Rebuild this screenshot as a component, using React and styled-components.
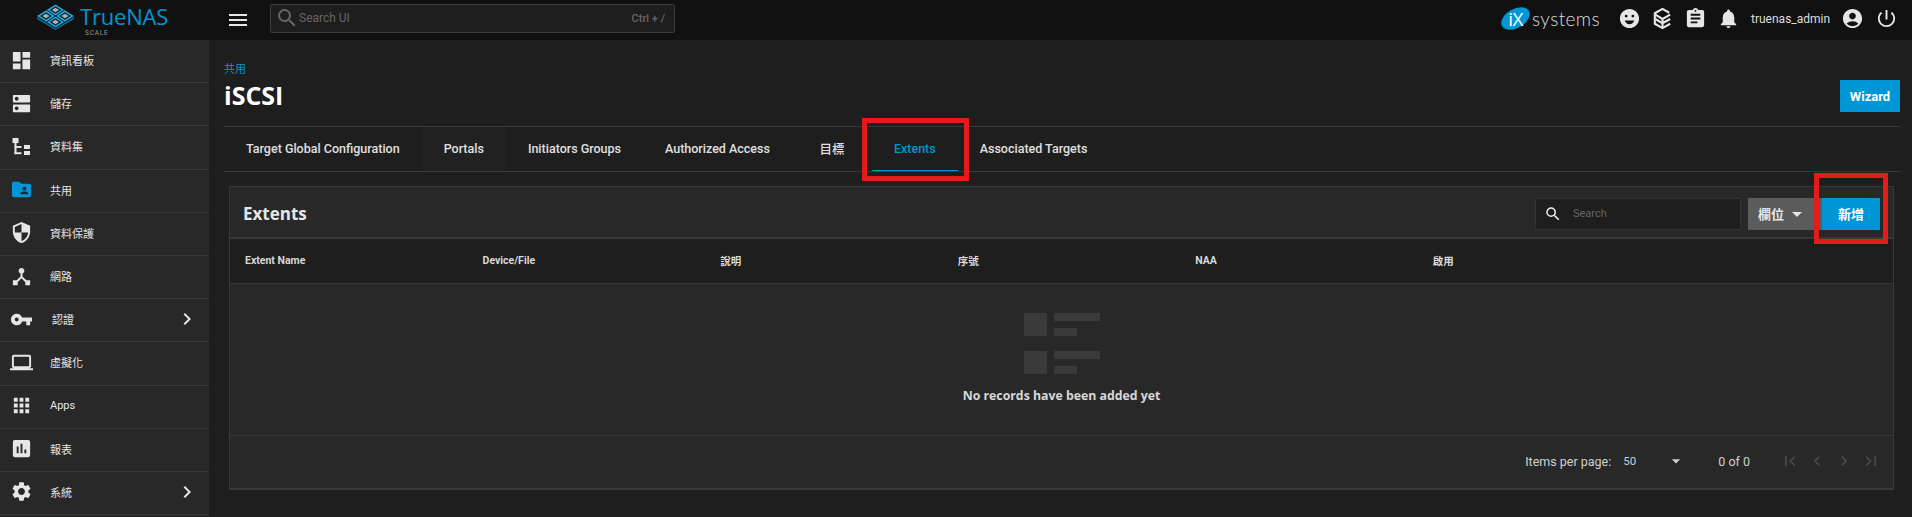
import React from "react"
import styled, { createGlobalStyle } from "styled-components"
import {
  MdDashboard,
  MdDns,
  MdFolderShared,
  MdSecurity,
  MdDeviceHub,
  MdVpnKey,
  MdLaptop,
  MdApps,
  MdAssessment,
  MdSettings,
  MdChevronRight,
  MdChevronLeft,
  MdFirstPage,
  MdLastPage,
  MdMenu,
  MdSearch,
  MdEmojiEmotions,
  MdAssignment,
  MdNotifications,
  MdAccountCircle,
  MdPowerSettingsNew,
  MdArrowDropDown,
} from "react-icons/md"

const cjk = `"Noto Sans CJK TC"`
const bodyFont = `Roboto, ${cjk}, sans-serif`
const blue = "#0095d5"
const line = "#383838"

const GlobalStyles = createGlobalStyle`
  html, body {
    margin: 0;
    height: 100%;
    overflow: hidden;
    background: #1e1e1e;
    font-family: ${bodyFont};
  }
  * {
    box-sizing: border-box;
  }
`

const Shell = styled.div`
  height: 517px;
  display: flex;
  flex-direction: column;
`

// TOP BAR
const Topbar = styled.header`
  height: 40px;
  flex: none;
  background: #111;
  display: flex;
  align-items: center;
  color: #e6e6e6;
`

const LogoBox = styled.div`
  width: 209px;
  flex: none;
  padding-left: 37px;
  display: flex;
  align-items: flex-start;
  gap: 6px;
  height: 40px;
  padding-top: 4px;
`

const LogoText = styled.div`
  position: relative;
  color: ${blue};
  font-family: "Open Sans", sans-serif;
  font-size: 22px;
  line-height: 25px;
  letter-spacing: -0.2px;
  width: 90px;

  span {
    position: absolute;
    left: 5px;
    top: 25px;
    font-family: Roboto, sans-serif;
    font-size: 6.5px;
    line-height: 8px;
    letter-spacing: 0.8px;
    color: #999;
  }
`

const MenuButton = styled.div`
  width: 61px;
  flex: none;
  padding-left: 17px;
  display: flex;
  font-size: 24px;
  color: #e6e6e6;
`

const TopSearch = styled.div`
  width: 405px;
  height: 29px;
  margin-top: -4px;
  border: 1px solid #3c3c3c;
  border-radius: 2px;
  background: #1e1e1e;
  display: flex;
  align-items: center;
  padding: 0 9px 0 4px;
  color: #666;
  font-size: 12px;

  svg {
    font-size: 24px;
    margin-right: 0;
  }

  em {
    font-style: normal;
    margin-left: auto;
    font-size: 11px;
    font-weight: 500;
  }
`

const TopRight = styled.div`
  margin-left: auto;
  display: flex;
  align-items: center;
  height: 40px;
  padding-right: 4px;
  margin-top: -3px;
`

const IxLogo = styled.div`
  display: flex;
  align-items: center;
  margin-right: 13px;
`

const IxBadge = styled.div`
  width: 31px;
  height: 19px;
  background: ${blue};
  border-radius: 50%;
  transform: rotate(-30deg);
  display: flex;
  align-items: center;
  justify-content: center;

  span {
    transform: rotate(30deg);
    color: #fff;
    font-family: "Open Sans", sans-serif;
    font-size: 19px;
    line-height: 20px;
    letter-spacing: -0.5px;
  }
`

const IxName = styled.span`
  font-family: Lato, sans-serif;
  font-weight: 300;
  font-size: 19px;
  line-height: 24px;
  margin-left: 1px;
  color: #ddd;
  letter-spacing: 0.4px;
`

const TopIcon = styled.div`
  width: ${(p) => p.$w || 33}px;
  display: flex;
  justify-content: center;
  font-size: 23px;
  color: #e6e6e6;
`

const UserName = styled.span`
  width: 89px;
  margin-left: 6px;
  font-size: 12px;
  color: #ddd;
  white-space: nowrap;
`

// SIDEBAR
const Layout = styled.div`
  flex: 1;
  display: flex;
  min-height: 0;
`

const Sidebar = styled.nav`
  width: 209px;
  flex: none;
  background: #282828;
  overflow: hidden;
`

const NavRow = styled.div`
  height: 43.2px;
  padding-left: ${(p) => p.$pad || 50}px;
  padding-bottom: 2px;
  border-bottom: 1px solid ${line};
  display: flex;
  align-items: center;
  position: relative;
  font-size: 11px;
  color: #e6e6e6;
`

const NavIcon = styled.div`
  width: 24px;
  position: absolute;
  left: 9px;
  display: flex;
  justify-content: center;
  font-size: 23px;
  color: ${(p) => (p.$active ? blue : "#e6e6e6")};
`

const NavArrow = styled.div`
  position: absolute;
  left: 175px;
  display: flex;
  font-size: 24px;
  color: #e6e6e6;
`

// PAGE
const Main = styled.main`
  flex: 1;
  min-width: 0;
  padding: 0 12px 0 15px;
  background: #1e1e1e;
`

const PageHead = styled.div`
  height: 87px;
  padding-bottom: 14px;
  border-bottom: 1px solid ${line};
  display: flex;
  justify-content: space-between;
  align-items: flex-end;
`

const Crumb = styled.div`
  font-size: 11px;
  line-height: 14px;
  color: ${blue};
  margin-bottom: 4px;
`

const Title = styled.h1`
  margin: 0 0 3px;
  font-family: "Open Sans", sans-serif;
  font-size: 25px;
  line-height: 28px;
  font-weight: 700;
  color: #fff;
`

const Wizard = styled.button`
  width: 60px;
  height: 32px;
  border: none;
  padding: 0;
  background: ${blue};
  color: #fff;
  font-family: ${bodyFont};
  font-size: 13px;
  font-weight: 700;
`

const TabBar = styled.div`
  height: 45px;
  border-bottom: 1px solid ${line};
  display: flex;
`

const Tab = styled.div`
  height: 44px;
  min-width: 80px;
  padding: 0 22px;
  position: relative;
  display: flex;
  align-items: center;
  justify-content: center;
  font-size: 12.5px;
  font-weight: 500;
  background: ${(p) => (p.$shaded ? "#212121" : "transparent")};
  color: ${(p) => (p.$active ? blue : "#e0e0e0")};
  border-bottom: 1px solid ${(p) => (p.$active ? blue : "transparent")};
`

const RedBox = styled.div`
  position: absolute;
  top: ${(p) => p.$t}px;
  right: ${(p) => p.$r}px;
  bottom: ${(p) => p.$b}px;
  left: ${(p) => p.$l}px;
  border: 5px solid #e21b1b;
`

const Card = styled.section`
  margin: 14px 6px 0 5px;
  background: #282828;
  border: 1px solid ${line};
  border-bottom-width: 2px;
`

const CardHead = styled.div`
  height: 52px;
  border-bottom: 2px solid ${line};
  padding: 4px 13px 1px 13px;
  display: flex;
  align-items: center;
`

const CardTitle = styled.h2`
  margin: 0;
  font-family: "Open Sans", sans-serif;
  font-size: 17px;
  font-weight: 700;
  color: #e6e6e6;
  margin-right: auto;
`

const TableSearch = styled.div`
  width: 206px;
  height: 32px;
  background: #1e1e1e;
  border: 1px solid #333;
  padding-left: 8px;
  display: flex;
  align-items: center;
  font-size: 11px;
  color: #666;

  svg {
    font-size: 18px;
    color: #eee;
    margin-right: 11px;
  }
`

const ColumnsButton = styled.div`
  width: 74px;
  height: 32px;
  margin-left: 7px;
  background: #5b5b5b;
  padding-left: 10px;
  display: flex;
  align-items: center;
  font-size: 13px;
  font-weight: 700;
  color: #e6e6e6;

  svg {
    font-size: 24px;
    margin-left: 1px;
  }
`

const AddButton = styled.div`
  width: 58px;
  height: 32px;
  position: relative;
  background: ${blue};
  display: flex;
  align-items: center;
  justify-content: center;
  font-size: 13px;
  font-weight: 700;
  color: #fff;
`

const HeadRow = styled.div`
  height: 45px;
  background: #1e1e1e;
  border-bottom: 1px solid ${line};
  display: grid;
  grid-template-columns: repeat(7, 1fr);
  align-items: center;
  padding-bottom: 1px;
`

const HeadCell = styled.div`
  padding-left: 15px;
  font-size: 10.5px;
  font-weight: 700;
  color: #d8d8d8;
`

const Empty = styled.div`
  height: 151px;
  padding-top: 29px;
  display: flex;
  flex-direction: column;
  align-items: center;
  gap: 13px;
  font-family: "Open Sans", sans-serif;
  font-size: 12.3px;
  font-weight: 700;
  color: #d8d8d8;
`

const EmptyRows = styled.div`
  display: grid;
  gap: 15px;
`

const EmptyRow = styled.div`
  display: grid;
  grid-template-columns: 23px 23px 23px;
  grid-template-rows: 8px 8px;
  column-gap: 7px;
  row-gap: 7px;
  width: 76px;
  height: 23px;
`

const EmptySquare = styled.div`
  grid-row: 1 / 3;
  background: #3a3a3a;
`

const EmptyLong = styled.div`
  grid-column: 2 / 4;
  width: 46px;
  background: #3a3a3a;
`

const EmptyShort = styled.div`
  background: #3a3a3a;
`

const Pager = styled.div`
  height: 53px;
  border-top: 1px solid ${line};
  display: flex;
  align-items: center;
  justify-content: flex-end;
  padding: 0 9px 2px 0;
  font-size: 12.5px;
  color: #d0d0d0;
`

const PageSize = styled.div`
  width: 65px;
  margin-left: 12px;
  display: flex;
  align-items: center;
  justify-content: space-between;
  font-size: 11.5px;

  svg {
    font-size: 20px;
    margin-right: 2px;
  }
`

const PageCount = styled.span`
  margin-left: 30px;
  margin-right: 26px;
`

const PageBtn = styled.div`
  width: 27px;
  display: flex;
  justify-content: center;
  font-size: 20px;
  color: #4a4a4a;
`

// DRAWINGS
const TrueNasMark = () => {
  const cells = [
    [9, 12],
    [18.5, 6],
    [28, 12],
    [18.5, 18],
  ]
  return (
    <svg width="37" height="26" viewBox="0 0 37 26">
      <polygon points="0,12 18.5,0.5 37,12 18.5,23.5" fill="#24a7e0" />
      <polygon points="0,13 18.5,24.5 37,13 37,15 18.5,26 0,15" fill="#0a6f9e" />
      {cells.map(([x, y]) => (
        <g key={`${x}-${y}`}>
          <polygon
            points={`${x - 6},${y} ${x},${y - 3.8} ${x + 6},${y} ${x},${y + 3.8}`}
            fill="#0e2530"
          />
          <polygon
            points={`${x - 3.6},${y} ${x},${y - 2.2} ${x + 3.6},${y} ${x},${y + 2.2}`}
            fill="#b0b0b0"
          />
        </g>
      ))}
      <path d="M9.5 6L27.5 18M27.5 6L9.5 18" stroke="#111" strokeWidth="0.9" />
    </svg>
  )
}

const TreeIcon = () => (
  <svg width="1em" height="1em" viewBox="0 0 24 24" fill="currentColor">
    <rect x="2.6" y="3.1" width="6.3" height="5.3" />
    <rect x="4.7" y="8" width="2.1" height="12" />
    <rect x="4.7" y="11.5" width="7.3" height="2" />
    <rect x="4.7" y="18" width="7.3" height="2" />
    <rect x="14.6" y="10.4" width="6.3" height="4.2" />
    <rect x="14.6" y="16.7" width="6.3" height="4.2" />
  </svg>
)

const TrueCommandIcon = () => (
  <svg width="1em" height="1em" viewBox="0 0 24 24" fill="none" stroke="currentColor" strokeWidth="2.2">
    <path d="M19 6L12 2 4 6.5v11L12 22l8-4.5" />
    <path d="M4.5 8l7.5 4.5L20 8M12 12.5V21M20 12.5l-8 4.5-7.5-4.5" />
  </svg>
)

const navItems = [
  { label: "資訊看板", icon: <MdDashboard /> },
  { label: "儲存", icon: <MdDns /> },
  { label: "資料集", icon: <TreeIcon /> },
  { label: "共用", icon: <MdFolderShared />, active: true },
  { label: "資料保護", icon: <MdSecurity /> },
  { label: "網路", icon: <MdDeviceHub /> },
  { label: "認證", icon: <MdVpnKey />, arrow: true, pad: 52 },
  { label: "虛擬化", icon: <MdLaptop /> },
  { label: "Apps", icon: <MdApps /> },
  { label: "報表", icon: <MdAssessment /> },
  { label: "系統", icon: <MdSettings />, arrow: true },
]

const tabs = [
  "Target Global Configuration",
  "Portals",
  "Initiators Groups",
  "Authorized Access",
  "目標",
  "Extents",
  "Associated Targets",
]

const columns = ["Extent Name", "Device/File", "說明", "序號", "NAA", "啟用", ""]

const App = () => {
  return (
    <Shell>
      <GlobalStyles />
      <Topbar>
        <LogoBox>
          <TrueNasMark />
          <LogoText>
            TrueNAS
            <span>SCALE</span>
          </LogoText>
        </LogoBox>
        <MenuButton>
          <MdMenu />
        </MenuButton>
        <TopSearch>
          <MdSearch />
          Search UI
          <em>Ctrl + /</em>
        </TopSearch>
        <TopRight>
          <IxLogo>
            <IxBadge>
              <span>iX</span>
            </IxBadge>
            <IxName>systems</IxName>
          </IxLogo>
          <TopIcon>
            <MdEmojiEmotions />
          </TopIcon>
          <TopIcon>
            <TrueCommandIcon />
          </TopIcon>
          <TopIcon>
            <MdAssignment />
          </TopIcon>
          <TopIcon>
            <MdNotifications />
          </TopIcon>
          <UserName>truenas_admin</UserName>
          <TopIcon $w={24}>
            <MdAccountCircle />
          </TopIcon>
          <TopIcon $w={44}>
            <MdPowerSettingsNew />
          </TopIcon>
        </TopRight>
      </Topbar>

      <Layout>
        <Sidebar>
          {navItems.map((item) => (
            <NavRow key={item.label} $pad={item.pad}>
              <NavIcon $active={item.active}>{item.icon}</NavIcon>
              {item.label}
              {item.arrow && (
                <NavArrow>
                  <MdChevronRight />
                </NavArrow>
              )}
            </NavRow>
          ))}
        </Sidebar>

        <Main>
          <PageHead>
            <div>
              <Crumb>共用</Crumb>
              <Title>iSCSI</Title>
            </div>
            <Wizard>Wizard</Wizard>
          </PageHead>

          <TabBar>
            {tabs.map((tab) => (
              <Tab key={tab} $active={tab === "Extents"} $shaded={tab === "Portals"}>
                {tab}
                {tab === "Extents" && <RedBox $t={-9} $r={-11} $b={-11} $l={-10} />}
              </Tab>
            ))}
          </TabBar>

          <Card>
            <CardHead>
              <CardTitle>Extents</CardTitle>
              <TableSearch>
                <MdSearch />
                Search
              </TableSearch>
              <ColumnsButton>
                欄位
                <MdArrowDropDown />
              </ColumnsButton>
              <AddButton>
                新增
                <RedBox $t={-25} $r={-8} $b={-14} $l={-8} />
              </AddButton>
            </CardHead>

            <HeadRow>
              {columns.map((col, i) => (
                <HeadCell key={i}>{col}</HeadCell>
              ))}
            </HeadRow>

            <Empty>
              <EmptyRows>
                {[0, 1].map((n) => (
                  <EmptyRow key={n}>
                    <EmptySquare />
                    <EmptyLong />
                    <EmptyShort />
                  </EmptyRow>
                ))}
              </EmptyRows>
              No records have been added yet
            </Empty>

            <Pager>
              Items per page:
              <PageSize>
                50
                <MdArrowDropDown />
              </PageSize>
              <PageCount>0 of 0</PageCount>
              <PageBtn>
                <MdFirstPage />
              </PageBtn>
              <PageBtn>
                <MdChevronLeft />
              </PageBtn>
              <PageBtn>
                <MdChevronRight />
              </PageBtn>
              <PageBtn>
                <MdLastPage />
              </PageBtn>
            </Pager>
          </Card>
        </Main>
      </Layout>
    </Shell>
  )
}

export default App
